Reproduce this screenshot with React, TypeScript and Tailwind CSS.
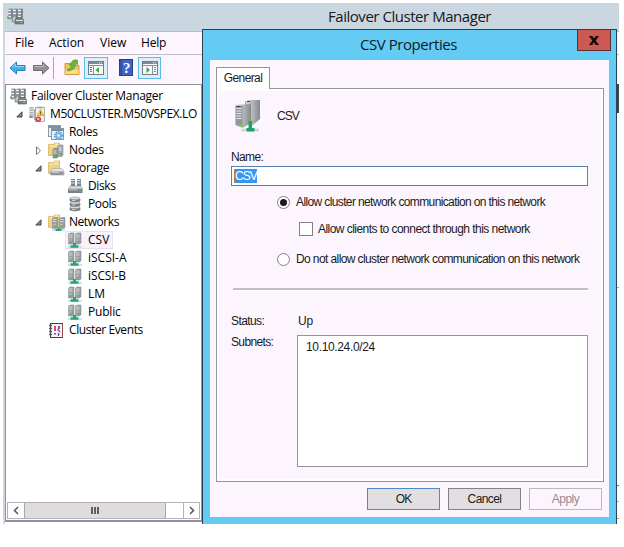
import type { ReactNode } from "react";

const menuItems = [
  { label: "File", className: "w-[34px]" },
  { label: "Action", className: "w-[51px]" },
  { label: "View", className: "w-[41px]" },
  { label: "Help", className: "tracking-[-0.2px]" },
];

function ClusterIcon() {
  return (
    <svg width="17" height="17" viewBox="0 0 17 17" className="shrink-0">
      {[0, 5, 10].map((x) => (
        <g key={x}>
          <path d={`M${x + 1} 2 l1 -1.5 h3.5 v9.5 l-1 1.5 h-3.5z`} fill="#9a9fa5" />
          <path d={`M${x + 1} 2.5 h3 M${x + 1} 5.5 h3 M${x + 1} 8.5 h3`} stroke="#f2f4f5" strokeWidth="1.2" />
          <path d={`M${x + 5} 1 v8.5`} stroke="#555c63" strokeWidth="1" />
        </g>
      ))}
      <rect x="0" y="8.5" width="2" height="2" fill="#62a847" />
      <path d="M6 8 h3 v6 h-4z" fill="#c3c7ca" stroke="#6d7378" strokeWidth=".7" />
      <path d="M8 12 l2 -2.5 h5 l1.5 2.5 v4 h-8.5z" fill="#7b8186" stroke="#565c61" strokeWidth=".6" />
      <path d="M9 12.5 h7" stroke="#dfe3e6" />
      <rect x="13.5" y="14" width="1.5" height="1" fill="#8ad25e" />
    </svg>
  );
}

function ClusterAlertIcon() {
  return (
    <svg width="17" height="17" viewBox="0 0 17 17" className="shrink-0">
      <path d="M.5 1 h4 v11 h-4z M5 3 h3 v11 h-3z" fill="#a9afb4" />
      <path d="M1 3 h3 M1 5.5 h3 M1 8 h3" stroke="#eef1f3" />
      <rect x=".5" y="10" width="2" height="2" fill="#5bab42" />
      <rect x="6.5" y="1.5" width="9" height="14" fill="#f5f2ee" stroke="#a09c98" strokeWidth=".8" />
      <rect x="8.5" y=".5" width="5" height="2" fill="#a4acb2" />
      <path d="M11.5 3.5 l3.500 6 h-7z" fill="#f8ce36" stroke="#c7951b" strokeWidth=".6" />
      <path d="M11.5 5.5 v2 M11.5 8.2 v.8" stroke="#54400c" strokeWidth=".9" />
      <circle cx="9.3" cy="13.2" r="2.8" fill="#cf4141" />
      <path d="M8.2 12.1 l2.2 2.2 m0 -2.2 l-2.2 2.2" stroke="#fff" strokeWidth=".8" />
    </svg>
  );
}

function RolesIcon() {
  return (
    <svg width="17" height="17" viewBox="0 0 17 17" className="shrink-0">
      <rect x=".5" y="1.5" width="12" height="11" fill="#eef3f7" stroke="#8b97a2" />
      <path d="M1 3 h11" stroke="#7994ae" strokeWidth="2" />
      <rect x="3.5" y="4.5" width="12" height="11" fill="#e8f0f6" stroke="#8b97a2" />
      <path d="M4 6 h11" stroke="#6f8fae" strokeWidth="2" />
      <circle cx="10.5" cy="11.5" r="3.6" fill="none" stroke="#5b9bd0" strokeWidth="1.8" strokeDasharray="1.5 .8" />
      <circle cx="10.5" cy="11.5" r="2.4" fill="#bcdcf1" stroke="#4f8fc6" strokeWidth=".8" />
      <circle cx="10.5" cy="11.5" r=".8" fill="#fff" />
    </svg>
  );
}

function Folder() {
  return (
    <>
      <path d="M.5 2.5 h5 l1 -1.5 h5 v12.5 h-11z" fill="#f1d37c" stroke="#d0ae5b" strokeWidth=".7" />
      <path d="M1 4 h10" stroke="#fbeab1" />
      <path d="M7 2 h3" stroke="#fff6dc" />
    </>
  );
}

function Towers() {
  return (
    <>
      <path d="M1.5 2 l1.5 -1 h4 v10 l-1.5 1 h-4z M8.5 2 l1.5 -1 h4 v10 l-1.5 1 h-4z" fill="#979da3" stroke="#82898f" strokeWidth=".5" />
      <path d="M2 3 h3.5 M2 5 h3.5 M9 3 h3.5 M9 5 h3.5" stroke="#d6dadd" />
      <path d="M2 8 h3 M9 8 h3" stroke="#b5babe" strokeWidth="1.5" />
      <path d="M4 9.5 h2 M11 9.5 h2" stroke="#64ba3e" strokeWidth="1.5" />
    </>
  );
}

function NodesIcon() {
  return (
    <svg width="17" height="17" viewBox="0 0 17 17" className="shrink-0">
      <Folder />
      <path d="M9.5 4.5 l1.5 -1.5 h4 v10 l-1 1.5 h-4.5z" fill="#a5abb0" stroke="#7d858b" strokeWidth=".6" />
      <path d="M5 8 l1 -1.5 h4 v8 l-1 1.5 h-4z" fill="#90989e" stroke="#6f777c" strokeWidth=".6" />
      <path d="M5.5 9 h3 M5.5 11 h3 M10.5 6 h3 M10.5 8 h3" stroke="#e5e9eb" strokeWidth=".9" />
      <path d="M7 14 h2 M12 12 h2" stroke="#52b334" strokeWidth="1.8" />
    </svg>
  );
}

function StorageIcon() {
  return (
    <svg width="17" height="17" viewBox="0 0 17 17" className="shrink-0">
      <Folder />
      <path d="M2.5 11 l2 -2.5 h9 l2.5 2.5 v4 h-13.5z" fill="#e2e4e6" stroke="#989da1" strokeWidth=".6" />
      <path d="M3 11.5 h12.5 v3.5 h-12.5z" fill="#8d9398" />
      <path d="M4 12.5 h7" stroke="#c8ccce" />
      <rect x="12" y="13" width="2" height="1" fill="#6cd34b" />
    </svg>
  );
}

function DisksIcon() {
  return (
    <svg width="17" height="17" viewBox="0 0 17 17" className="shrink-0">
      <path d="M4 1 h4 v7 h-4z M10 1 h4 v7 h-4z" fill="#75848c" />
      <path d="M4 2.5 h3.5 M4 5 h3.5 M10 2.5 h3.5 M10 5 h3.5" stroke="#d5ebf3" strokeWidth="1.2" />
      <path d="M3 8 h11 l1.5 3 h-14z" fill="#d9dcde" stroke="#8e9397" strokeWidth=".6" />
      <rect x="1" y="11" width="14.5" height="4" rx=".5" fill="#777d82" />
      <path d="M2 12 h9" stroke="#c9cdd0" />
      <rect x="12" y="12.5" width="2" height="1.2" fill="#67d048" />
    </svg>
  );
}

function PoolsIcon() {
  return (
    <svg width="17" height="17" viewBox="0 0 17 17" className="shrink-0">
      {[10.5, 6, 1.5].map((y) => (
        <g key={y}>
          <path d={`M3 ${y + 1} v2.5 q5 2 10 0 v-2.5z`} fill="#7d8186" stroke="#6b6f74" strokeWidth=".6" />
          <ellipse cx="8" cy={y + 0.8} rx="5" ry="1.3" fill="#dfe1e2" stroke="#8d9195" strokeWidth=".6" />
          <path d={`M5 ${y + 3} h3.5`} stroke="#d4d6d8" strokeWidth=".9" />
        </g>
      ))}
    </svg>
  );
}

function NetworkFolderIcon() {
  return (
    <svg width="18" height="17" viewBox="0 0 18 17" className="shrink-0">
      <Folder />
      <g transform="translate(3 2.5)">
        <Towers />
        <path d="M1 13.5 h13" stroke="#c3dce3" strokeWidth="1.5" />
        <path d="M6.5 11 h2 v1.5 h2 v2 h-6 v-2 h2z" fill="#27a777" />
      </g>
    </svg>
  );
}

function NetworkIcon() {
  return (
    <svg width="17" height="17" viewBox="0 0 17 17" className="shrink-0">
      <path d="M1 15 h14" stroke="#cce3ea" strokeWidth="2.2" />
      <Towers />
      <path d="M6 11 h3 v2.2 h2.5 v2.6 h-8 v-2.6 h2.500z" fill="#22a878" />
    </svg>
  );
}

function EventsIcon() {
  return (
    <svg width="17" height="17" viewBox="0 0 17 17" className="shrink-0">
      <rect x="2.5" y="1.5" width="12" height="14" fill="#f4f2fa" stroke="#454348" />
      <path d="M1 3.5 h3 M1 6.5 h3 M1 9.5 h3 M1 12.5 h3" stroke="#5c5a60" strokeWidth="1.3" />
      <path d="M7 4 v5" stroke="#d33b45" strokeWidth="1.8" />
      <path d="M7 11 v1.5 M11 4 v3" stroke="#5150b8" strokeWidth="1.8" />
      <path d="M9.500 7 l2.500 3" stroke="#cf4861" strokeWidth="1.5" />
      <path d="M10.500 11 v3" stroke="#6a50c0" strokeWidth="1.5" />
      <path d="M14.5 2 v13.5" stroke="#9b4550" />
    </svg>
  );
}

function Expander({ open }: { open: boolean }) {
  return (
    <svg width="8" height="9" viewBox="0 0 8 9" className="shrink-0">
      {open ? (
        <path d="M6 1.8 v5.2 h-5.2z" fill="#888" stroke="#444" />
      ) : (
        <path d="M1.5 .8 l4 3.9 l-4 3.9z" fill="#fff" stroke="#777" />
      )}
    </svg>
  );
}

type NodeProps = { icon: ReactNode; label: string; depth: number; open?: boolean; selected?: boolean; className?: string };

function TreeNode({ icon, label, depth, open, selected, className = "" }: NodeProps) {
  const indent = ["pl-[4px]", "pl-[10px]", "pl-[29px]", "pl-[48px]"][depth];
  return (
    <div className={`flex h-[18px] items-center whitespace-nowrap ${indent}`}>
      {depth > 0 && (
        <span className="flex w-[13px] shrink-0">{open !== undefined && <Expander open={open} />}</span>
      )}
      <div
        className={
          selected
            ? "-ml-[2px] flex h-[18px] w-[48px] items-center gap-[4px] border border-[#eadfec] bg-[#f9f2fa] pl-px"
            : "flex items-center gap-[4px]"
        }
      >
        {icon}
        <span className={className}>{label}</span>
      </div>
    </div>
  );
}

function Toolbar() {
  return (
    <div className="flex h-[29px] shrink-0 items-center border-t border-[#c2bec6] bg-[#fcf5fd] pb-[3px] pl-[4px]">
      <svg width="18" height="16" viewBox="0 0 18 16">
        <path d="M1 8 l6.5 -6 v3.5 h8.5 v5 h-8.5 v3.5z" fill="#43aee9" stroke="#2380c0" strokeLinejoin="round" />
        <path d="M3 7.5 l3.5 -3.2 v2.2 h8.5" fill="none" stroke="#91d8fa" />
      </svg>
      <svg width="18" height="16" viewBox="0 0 18 16" className="ml-[5px]">
        <path d="M17 8 l-6.5 -6 v3.5 h-9 v5 h9 v3.5z" fill="#929292" stroke="#6e6e6e" strokeLinejoin="round" />
        <path d="M2.5 6.5 h9 v-2" fill="none" stroke="#c0c0c0" />
      </svg>
      <div className="ml-[3px] h-[22px] w-px bg-[#aaa7ac]" />
      <svg width="16" height="17" viewBox="0 0 16 17" className="ml-[10px]">
        <path d="M1 4.5 h5 l1 2 h8 v9 h-14z" fill="#eec45e" stroke="#c99c3d" />
        <path d="M1.500 13 h13" stroke="#fbdc8a" strokeWidth="4" />
        <path d="M3.5 10.500 q4 -1 4 -4.500 h-2.500 l4.500 -5 h4 v4.500 l-1.500 -1 q-1 7 -8.500 7.500z" fill="#64b838" stroke="#44922b" strokeWidth=".6" />
      </svg>
      <div className="ml-[4px] flex h-[22px] w-[24px] items-center justify-center border border-[#5bbbe9] bg-[#dceffa]">
        <PaneIcon />
      </div>
      <svg width="14" height="17" viewBox="0 0 14 17" className="ml-[11px]">
        <rect x=".5" y=".5" width="13" height="16" fill="#3d63c4" stroke="#2a3f80" />
        <path d="M2 1 v15" stroke="#26418e" />
        <text x="7.8" y="13.5" textAnchor="middle" fontSize="15" fontFamily="Liberation Serif, serif" fontWeight="bold" fill="#fff">?</text>
      </svg>
      <div className="ml-[5px] flex h-[22px] w-[23px] items-center justify-center border border-[#5bbbe9] bg-[#dceffa]">
        <PaneIcon flipped />
      </div>
    </div>
  );
}

function PaneIcon({ flipped = false }: { flipped?: boolean }) {
  return (
    <svg width="16" height="14" viewBox="0 0 16 14">
      <rect x=".5" y=".5" width="15" height="13" fill="#f8f9fa" stroke="#747d84" />
      <path d="M1 2 h14" stroke="#808990" strokeWidth="2" />
      <path d="M11 1.8 h1 M13 1.8 h1" stroke="#fff" />
      {flipped ? (
        <>
          <path d="M1 4.5 h14 M10.5 4 v9" stroke="#89929a" />
          <path d="M12 6.5 h2 M12 8.5 h2 M12 10.5 h2" stroke="#5e8bae" />
          <path d="M4.5 6 l3.5 3 l-3.5 3z" fill="#43a83a" />
        </>
      ) : (
        <>
          <path d="M1 4.5 h14 M5.5 4 v9" stroke="#89929a" />
          <path d="M2 6.5 h2 M2 8.5 h2 M2 10.5 h2" stroke="#3f7db2" />
          <path d="M11 6 l-3.5 3 l3.5 3z" fill="#43a83a" />
        </>
      )}
    </svg>
  );
}

function Tree() {
  return (
    <div className="flex w-[197px] shrink-0 flex-col border border-b-2 border-[#92909e] bg-white">
      <div className="flex-1 overflow-hidden pt-[2px] font-['Open_Sans',sans-serif] text-[12px] leading-[18px] text-black">
        <TreeNode depth={0} icon={<ClusterIcon />} label="Failover Cluster Manager" className="tracking-[-0.31px]" />
        <TreeNode depth={1} open icon={<ClusterAlertIcon />} label="M50CLUSTER.M50VSPEX.LO" className="tracking-[-0.38px]" />
        <TreeNode depth={2} icon={<RolesIcon />} label="Roles" className="tracking-[-0.3px]" />
        <TreeNode depth={2} open={false} icon={<NodesIcon />} label="Nodes" className="tracking-[-0.3px]" />
        <TreeNode depth={2} open icon={<StorageIcon />} label="Storage" className="tracking-[-0.4px]" />
        <TreeNode depth={3} icon={<DisksIcon />} label="Disks" className="tracking-[-0.4px]" />
        <TreeNode depth={3} icon={<PoolsIcon />} label="Pools" className="tracking-[-0.4px]" />
        <TreeNode depth={2} open icon={<NetworkFolderIcon />} label="Networks" className="-ml-px tracking-[-0.45px]" />
        <TreeNode depth={3} selected icon={<NetworkIcon />} label="CSV" />
        <TreeNode depth={3} icon={<NetworkIcon />} label="iSCSI-A" />
        <TreeNode depth={3} icon={<NetworkIcon />} label="iSCSI-B" className="tracking-[-0.1px]" />
        <TreeNode depth={3} icon={<NetworkIcon />} label="LM" />
        <TreeNode depth={3} icon={<NetworkIcon />} label="Public" className="tracking-[-0.2px]" />
        <TreeNode depth={2} icon={<EventsIcon />} label="Cluster Events" className="tracking-[-0.4px]" />
      </div>
      {/* Horizontal scrollbar */}
      <div className="mx-px mb-px flex h-[17px] border border-[#b5b2b7]">
        <div className="flex w-[16px] items-center justify-center">
          <svg width="6" height="9" viewBox="0 0 6 9"><path d="M5 1 L1.5 4.5 L5 8" fill="none" stroke="#555" strokeWidth="1.5" /></svg>
        </div>
        <div className="flex w-[142px] items-center justify-center gap-px border-x border-[#aaa6aa] bg-[#dfdbdf]">
          <span className="h-[7px] w-[2px] bg-[#605e61]" />
          <span className="h-[7px] w-[2px] bg-[#605e61]" />
          <span className="h-[7px] w-[2px] bg-[#605e61]" />
        </div>
        <div className="flex-1" />
        <div className="flex w-[16px] items-center justify-center border-l border-[#b5b2b7]">
          <svg width="6" height="9" viewBox="0 0 6 9"><path d="M1 1 L4.5 4.5 L1 8" fill="none" stroke="#555" strokeWidth="1.5" /></svg>
        </div>
      </div>
    </div>
  );
}

function ServersIcon() {
  return (
    <svg width="25" height="34" viewBox="0 0 25 34">
      <defs>
        <linearGradient id="side">
          <stop offset="0" stopColor="#e2e4e5" />
          <stop offset="1" stopColor="#85898d" />
        </linearGradient>
      </defs>
      <path d="M10 2.500 l3 -1.500 h12 v19 l-7 6 h-8z" fill="url(#side)" />
      <path d="M10 2.500 l6 .5 v21 h-6z" fill="#a3a8ac" />
      <path d="M11 4 h4 M11 7 h4 M11 9.5 h4" stroke="#eceeef" />
      <path d="M.5 6.500 l3 -1 h12.500 v18.500 l-8.500 5 l-7 -3z" fill="url(#side)" />
      <path d="M.5 6.500 l7 .5 v21.500 l-7 -2.500z" fill="#92979b" />
      <path d="M1.5 9.500 h5 M1.5 12 h5 M1.5 14.5 h5 M1.5 17 h5 M1.5 19.5 h5" stroke="#e7eaeb" />
      <path d="M1.500 7.500 h4 M12 2.500 h3" stroke="#43484c" />
      <path d="M4.500 26.5 h4 M15 21.500 h2.500" stroke="#86c93e" strokeWidth="2.2" />
      <path d="M6 31 h18" stroke="#c9d4d6" strokeWidth="2.5" />
      <path d="M13.5 22 h3.500 v7 h2.500 v3.500 h-8 v-3.500 h2z" fill="#1ca36c" />
    </svg>
  );
}

function Radio({ checked = false }: { checked?: boolean }) {
  return (
    <span className="flex size-[13px] shrink-0 items-center justify-center rounded-full border border-[#828085] bg-white">
      {checked && <span className="size-[7px] rounded-full bg-[#1b1b1b]" />}
    </span>
  );
}

function PropertiesDialog() {
  return (
    <div className="absolute top-[26px] left-[199px] flex h-[495px] w-[415px] flex-col border border-b-0 border-[#28434f] bg-[#64cbf5] px-[7px] pb-[7px]">
      <div className="relative flex h-[30px] shrink-0 justify-center font-['Open_Sans',sans-serif] text-[15px] leading-[29px] text-[#101c22]">
        <span className="pr-[2px] tracking-[-0.45px]">CSV Properties</span>
        <button className="absolute top-0 -right-[2px] flex h-[21px] w-[34px] items-center justify-center border border-t-0 border-[#5b3032] bg-[#cb5851]">
          <svg width="10" height="9" viewBox="0 0 10 9"><path d="M0 0 h3.2 L5 2.5 L6.8 0 H10 L6.7 4.4 L10 9 H6.7 L5 6.3 L3.3 9 H0 L3.3 4.4z" fill="#130b0b" /></svg>
        </button>
      </div>

      <div className="flex flex-1 flex-col bg-[#fcf5fd] px-[6px] pt-[7px] font-['Liberation_Sans',sans-serif] text-[12px] leading-[14px] text-[#1b1a1c]">
        <div className="z-10 -mb-px flex h-[22px] w-[54px] shrink-0 items-center justify-center border border-b-0 border-[#96939a] bg-white pb-[2px]">
          <span className="tracking-[-0.6px]">General</span>
        </div>
        <div className="flex h-[394px] w-[388px] shrink-0 flex-col border border-[#96939a] pr-[15px] pl-[14px] shadow-[inset_0_0_0_2px_#fff]">
          <div className="mt-[10px] flex h-[34px] items-center pl-[4px]">
            <ServersIcon />
            <span className="ml-[17px] tracking-[-0.9px]">CSV</span>
          </div>
          <span className="mt-[17px] tracking-[-0.65px]">Name:</span>
          <div className="mt-[2px] flex h-[20px] items-center border border-[#5383ae] bg-white px-[2px]">
            <span className="border-l border-[#c08042] bg-[#3597f1] tracking-[-0.9px] text-white">CSV</span>
          </div>
          <label className="mt-[9px] flex h-[14px] items-center gap-[6px] pl-[46px] whitespace-nowrap">
            <Radio checked />
            <span className="tracking-[-0.62px]">Allow cluster network communication on this network</span>
          </label>
          <label className="mt-[13px] flex h-[14px] items-center gap-[5px] pl-[68px] whitespace-nowrap">
            <span className="size-[14px] shrink-0 border border-[#828085] bg-white" />
            <span className="tracking-[-0.54px]">Allow clients to connect through this network</span>
          </label>
          <label className="mt-[16px] flex h-[14px] items-center gap-[6px] pl-[46px] whitespace-nowrap">
            <Radio />
            <span className="tracking-[-0.6px]">Do not allow cluster network communication on this network</span>
          </label>
          <div className="mt-[22px] ml-[2px] h-[3px] shrink-0 border-b border-white bg-[#c2bdc3]" />
          <div className="mt-[23px] flex">
            <span className="w-[67px] tracking-[-0.6px]">Status:</span>
            <span className="tracking-[-0.2px]">Up</span>
          </div>
          <div className="mt-[7px] flex">
            <span className="w-[66px] shrink-0 tracking-[-0.65px]">Subnets:</span>
            <div className="h-[132px] flex-1 border border-[#96939a] bg-white pt-[4px] pl-[8px]">
              <span className="tracking-[-0.35px]">10.10.24.0/24</span>
            </div>
          </div>
        </div>
        <div className="mt-[6px] flex justify-end gap-[8px] pr-px">
          <button className="h-[22px] w-[73px] border border-[#4f8ac5] bg-[#e1dfe2] tracking-[-0.9px]">OK</button>
          <button className="h-[22px] w-[73px] border border-[#848086] bg-[#e1dfe2] tracking-[-0.6px]">Cancel</button>
          <button className="h-[22px] w-[73px] border border-[#bdb8bf] tracking-[-0.5px] text-[#918e93]" disabled>Apply</button>
        </div>
      </div>
    </div>
  );
}

export default function App() {
  return (
    <div className="h-[547px] w-[624px] overflow-hidden bg-white pt-[3px] pl-[3px]">
      <div className="relative flex h-[521px] w-[616px] flex-col overflow-hidden bg-[#cad7e1] pl-[2px]">
        <div className="flex h-[28px] shrink-0 items-center pb-[2px] font-['Open_Sans',sans-serif]">
          <div className="ml-[2px]"><ClusterIcon /></div>
          <span className="ml-[304px] text-[15px] leading-[26px] tracking-[-0.46px] whitespace-nowrap text-[#17191b]">Failover Cluster Manager</span>
        </div>
        <div className="flex h-[23px] shrink-0 items-center border-t border-[#b9bec6] bg-[#fcf5fd] pl-[10px] font-['Open_Sans',sans-serif] text-[12px] text-black">
          {menuItems.map((item) => (
            <span key={item.label} className={item.className}>{item.label}</span>
          ))}
        </div>
        <Toolbar />
        <div className="flex flex-1 flex-col bg-white">
          <div className="mt-px flex h-[438px] justify-between">
            <Tree />
            {/* Sliver of the details pane right of the dialog */}
            <div className="flex w-[2px] flex-col">
              <div className="h-[29px] bg-[#414141]" />
              <div className="h-[175px] border-b border-[#aaa]" />
              <div className="h-[198px] border-b border-[#777]" />
              <div className="h-[16px] border-b border-[#aaa]" />
              <div className="h-[17px] border-b border-[#999]" />
            </div>
          </div>
        </div>
        <PropertiesDialog />
      </div>
    </div>
  );
}
